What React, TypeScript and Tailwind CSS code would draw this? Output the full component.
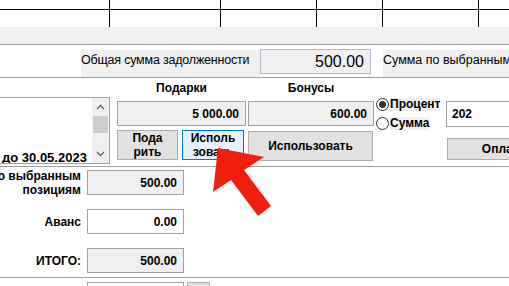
const font = { fontFamily: '"Liberation Sans", Arial, sans-serif' };

const Line = () => <div className="h-px bg-[#a0a0a0]" />;

const Field = ({ value, className }: { value: string; className: string }) => (
  <div
    className={`flex items-center justify-end border border-[#a0a0a0] pr-[6px] text-[12px] font-bold text-black ${className}`}
  >
    {value}
  </div>
);

const Btn = ({ children, className }: { children: React.ReactNode; className: string }) => (
  <div
    className={`flex items-center justify-center text-center text-[12px] font-bold leading-[14px] text-black ${className}`}
  >
    {children}
  </div>
);

const Radio = ({ label, checked }: { label: string; checked?: boolean }) => (
  <div className="flex h-[13px] items-center">
    <span className="flex h-[13px] w-[13px] items-center justify-center rounded-full border border-[#333] bg-white">
      {checked && <span className="h-[7px] w-[7px] rounded-full bg-[#333]" />}
    </span>
    <span className="ml-px bg-[#f0f0f0] text-[12px] font-bold leading-[13px]">{label}</span>
  </div>
);

const Grid = () => {
  const cols = [110, 111, 96, 66, 96, 40];
  return (
    <div className="flex h-[27px] overflow-hidden">
      {cols.map((w, i) => (
        <div key={i} className="shrink-0 border-r border-black" style={{ width: w }}>
          <div className="h-[10px] border-b border-black" />
        </div>
      ))}
    </div>
  );
};

export default function App() {
  return (
    <div className="relative h-[286px] w-[509px] overflow-hidden bg-white text-black" style={font}>
      <Grid />
      <div className="h-[17px] bg-[#f0f0f0]" />
      <Line />

      {/* total debt row */}
      <div className="flex h-[32px] items-start">
        <div className="ml-[81px] mt-[5px] h-[27px] w-[179px] shrink-0 whitespace-nowrap bg-[#f0f0f0] pt-[3px] text-[12.5px] leading-[15px] tracking-[-0.2px]">
          Общая сумма задолженности
        </div>
        <div className="mt-[4px] flex h-[25px] w-[111px] shrink-0 items-center justify-end border border-[#a9bcd3] bg-[#f0f0f0] pr-[6px] text-[16px]">
          500.00
        </div>
        <div className="ml-[12px] mt-[5px] h-[27px] w-[140px] shrink-0 whitespace-nowrap bg-[#f0f0f0] pt-[3px] text-[12.5px] leading-[15px]">
          Сумма по выбранным позициям
        </div>
      </div>
      <Line />

      {/* gifts / bonuses row */}
      <div className="flex h-[88px] items-start">
        <div className="relative ml-[-1px] mt-[19px] flex h-[67px] w-[111px] shrink-0 border border-[#a0a0a0] bg-white">
          <div className="h-full flex-1 overflow-hidden">
            <div className="pl-[2px] pt-[52px] text-[13px] font-bold leading-[15px] whitespace-nowrap">
              до 30.05.2023
            </div>
          </div>
          <div className="flex h-full w-[17px] flex-col items-center bg-[#f0f0f0]">
            <svg width="9" height="17" viewBox="0 0 9 17" className="mt-[1px]">
              <path d="M1 10 L4.5 6.5 L8 10" fill="none" stroke="#606060" strokeWidth="1.3" />
            </svg>
            <div className="h-[17px] w-[15px] bg-[#cdcdcd]" />
            <div className="flex-1" />
            <svg width="9" height="17" viewBox="0 0 9 17" className="mb-[1px]">
              <path d="M1 7 L4.5 10.5 L8 7" fill="none" stroke="#606060" strokeWidth="1.3" />
            </svg>
          </div>
        </div>

        <div className="ml-[7px] mt-[3px] w-[129px] shrink-0">
          <div className="text-center text-[12px] font-bold leading-[15px]">Подарки</div>
          <Field value="5 000.00" className="mt-[5px] h-[25px] w-[129px] bg-[#f0f0f0]" />
          <div className="mt-[4px] flex gap-[4px]">
            <Btn className="h-[30px] w-[61px] border border-[#adadad] bg-[#e1e1e1]">
              Пода
              <br />
              рить
            </Btn>
            <Btn className="h-[30px] w-[62px] border border-[#0078d7] bg-[#e5f1fb]">
              Исполь
              <br />
              зовать
            </Btn>
          </div>
        </div>

        <div className="ml-[2px] mt-[3px] w-[126px] shrink-0">
          <div className="text-center text-[12px] font-bold leading-[15px]">Бонусы</div>
          <Field value="600.00" className="mt-[5px] h-[25px] w-[126px] bg-[#f0f0f0]" />
          <Btn className="mt-[5px] h-[30px] w-[125px] border border-[#adadad] bg-[#e1e1e1]">Использовать</Btn>
        </div>

        <div className="ml-[2px] mt-[20px] flex w-[68px] shrink-0 flex-col gap-[6px]">
          <Radio label="Процент" checked />
          <Radio label="Сумма" />
        </div>

        <div className="ml-[2px] mt-[23px] shrink-0">
          <div className="flex h-[26px] w-[80px] items-center border border-[#a0a0a0] bg-white pl-[5px] text-[12px] font-bold">
            202
          </div>
          <Btn className="ml-px mt-[11px] h-[22px] w-[127px] border border-[#adadad] bg-[#e1e1e1]">Оплатить</Btn>
        </div>
      </div>
      <Line />

      {/* totals */}
      <div className="flex flex-col gap-[14px] pb-[4px] pt-[3px]">
        <div className="flex h-[25px] items-center">
          <div className="ml-[-79px] w-[160px] shrink-0 text-right text-[12px] font-bold leading-[14px]">
            Сумма по выбранным позициям
          </div>
          <Field value="500.00" className="ml-[6px] h-[25px] w-[97px] bg-[#f0f0f0]" />
        </div>
        <div className="flex h-[25px] items-center">
          <div className="w-[81px] shrink-0 text-right text-[12px] font-bold">Аванс</div>
          <Field value="0.00" className="ml-[6px] h-[25px] w-[97px] bg-white" />
        </div>
        <div className="flex h-[25px] items-center">
          <div className="w-[81px] shrink-0 text-right text-[12px] font-bold">ИТОГО:</div>
          <Field value="500.00" className="ml-[6px] h-[25px] w-[97px] bg-[#f0f0f0]" />
        </div>
      </div>
      <Line />
      <div className="flex pt-[4px]">
        <div className="ml-[87px] h-[25px] w-[97px] border border-[#a0a0a0] bg-white" />
        <div className="ml-[3px] h-[25px] w-[23px] border border-[#adadad] bg-[#e1e1e1]" />
      </div>

      {/* red pointer arrow */}
      <svg className="pointer-events-none absolute left-0 top-0" width="509" height="286">
        <polygon
          points="218,148 264,157 244,170 271,206 258,216 231,180 213,192"
          fill="#f21f0c"
        />
      </svg>
    </div>
  );
}
